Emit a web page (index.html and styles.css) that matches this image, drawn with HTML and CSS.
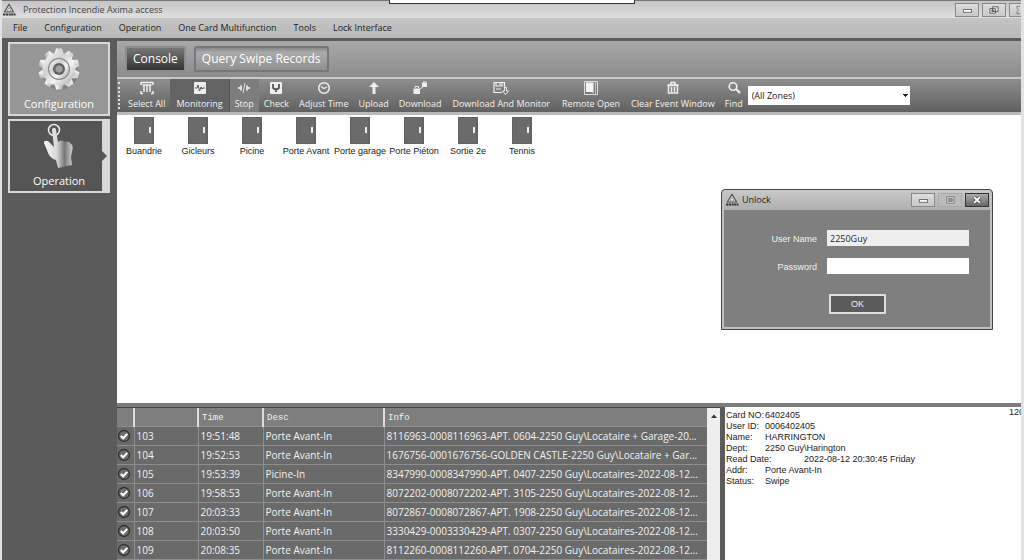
FILE: index.html
```html
<!DOCTYPE html>
<html lang="en">
<head>
<meta charset="utf-8">
<title>Protection Incendie Axima access</title>
<link rel="stylesheet" href="styles.css">
</head>
<body>
<svg class="defs" aria-hidden="true">
  <defs>
    <linearGradient id="metal" x1="0" y1="0" x2="1" y2="1">
      <stop offset="0" stop-color="#fff"/><stop offset=".35" stop-color="#cfcfcf"/><stop offset=".6" stop-color="#f4f4f4"/><stop offset="1" stop-color="#a0a0a0"/>
    </linearGradient>
    <linearGradient id="skin" x1="0" y1="0" x2="1" y2="0">
      <stop offset="0" stop-color="#fafafa"/><stop offset=".45" stop-color="#d8d8d8"/><stop offset=".72" stop-color="#777"/><stop offset="1" stop-color="#d0d0d0"/>
    </linearGradient>
    <symbol id="logo" viewBox="0 0 14 14">
      <path d="M7 1.200 11.600 9H2.400Z" fill="#ddd" stroke="#555" stroke-width="1.200" stroke-linejoin="round"/>
      <path d="M7 4.600 9 8H5Z" fill="#fff" stroke="#666" stroke-width=".6"/>
      <path d="M1 11.500h2.400M4 11.500h2.200M6.800 11.500h1.900M9.200 11.500h1.800M11.500 11.500H13.500" stroke="#333" stroke-width="2"/>
    </symbol>
    <symbol id="door" viewBox="0 0 20 27">
      <path d="M0 0h20v27H0z" fill="#626262"/><path d="M1 1h17v25H1z" fill="#6b6b6b"/>
      <path d="M15 10h2v6h-2z" fill="#eee"/>
    </symbol>
    <symbol id="tick" viewBox="0 0 14 14">
      <circle cx="7" cy="7" r="5.500" fill="#6c6c6c" stroke="#303030" stroke-width="1.300"/>
      <path d="M3.800 7 6.200 9.300 10.300 4.900" fill="none" stroke="#fff" stroke-width="2"/>
    </symbol>
  </defs>
</svg>
<div class="window">
  <header class="titlebar">
    <svg class="logo"><use href="#logo"/></svg>
    <h1 class="title">Protection Incendie Axima access</h1>
    <div class="winbuttons">
      <button class="winbtn" aria-label="Minimize"><svg viewBox="0 0 24 12"><rect x="8" y="5.500" width="9" height="3" fill="#fff" stroke="#666"/></svg></button>
      <button class="winbtn" aria-label="Restore"><svg viewBox="0 0 24 12"><path d="M10.500 2.500h6v5h-6zM7.500 4.500h6v5h-6z" fill="#eee" stroke="#555"/><path d="M9.500 6.500h2v1h-2z" stroke="#555" fill="none"/></svg></button>
      <button class="winbtn winbtn-cut" aria-label="Close"><svg viewBox="0 0 12 12"><path d="M11 2H7.500v2L9.500 6 7.500 8v2H11" fill="none" stroke="#777"/></svg></button>
    </div>
    <div class="topnotch"></div>
  </header>
  <nav class="menubar">
    <a href="#">File</a><a href="#">Configuration</a><a href="#">Operation</a><a href="#">One Card Multifunction</a><a href="#">Tools</a><a href="#">Lock Interface</a>
  </nav>
  <div class="body">
    <aside class="sidebar">
      <button class="side">
        <svg class="sideicon" viewBox="0 0 46 46">
          <circle cx="24" cy="26" r="18" fill="#6f6f6f" opacity=".5"/>
          <g fill="url(#metal)">
            <path id="teeth" d="M20 2.500h6l2 7H18zM20 43.500h6l2-7H18z"/>
            <use href="#teeth" transform="rotate(36 23 23)"/>
            <use href="#teeth" transform="rotate(72 23 23)"/>
            <use href="#teeth" transform="rotate(108 23 23)"/>
            <use href="#teeth" transform="rotate(144 23 23)"/>
            <circle cx="23" cy="23" r="16.500"/>
          </g>
          <circle cx="23" cy="23" r="11" fill="#858585"/>
          <circle cx="23" cy="23" r="10" fill="url(#metal)"/>
          <circle cx="23" cy="23" r="6" fill="#606060"/>
          <path d="m23 19 3.500 2v4L23 27l-3.500-2v-4z" fill="#a0a0a0"/>
        </svg>
        <span>Configuration</span>
      </button>
      <button class="side side-active">
        <svg class="sideicon" viewBox="0 0 46 46">
          <circle cx="18" cy="7" r="5.500" fill="none" stroke="#eee" stroke-width="1.500"/>
          <path d="M16 7c0-3 4-3 4 0l2 12c3-3 6-1 7 0 3-1 5 0 6 2 2 1 2 4 1 8l-1 5 1 8-14 3-2-8c-5-1-8-6-9-10l-3-7c0-3 4-3 6 0l4 4z" fill="url(#skin)"/>
        </svg>
        <span>Operation</span>
      </button>
    </aside>
    <main class="main">
      <div class="tabs">
        <button class="tab tab-active">Console</button>
        <button class="tab">Query Swipe Records</button>
      </div>
      <div class="toolbar">
        <div class="grip"></div>
        <button class="tool"><svg viewBox="0 0 16 14"><path d="M2 1v3M2 10v3M14 1v3M14 10v3M2 1.500h12M2 12.500h2M12 12.500h2M5 4v7M8 4v7M11 4v7M3.500 4h9" stroke="#eee" stroke-width="1.500" fill="none"/></svg><span>Select All</span></button>
        <button class="tool tool-wide tool-dark"><svg viewBox="0 0 16 14"><rect x="2" y="1" width="12" height="12" rx="1" fill="#eee"/><path d="M3 7h2l1-3 1.500 6L9 6l1 2 1-1h2" stroke="#555" fill="none"/></svg><span>Monitoring</span></button>
        <button class="tool tool-light"><svg viewBox="0 0 16 14"><path d="M2 7h3M11 7h3M5 4.500v5M11 4.500v5" stroke="#ddd" stroke-width="2"/><path d="M9 2 7 12" stroke="#ddd"/></svg><span>Stop</span></button>
        <button class="tool"><svg viewBox="0 0 16 14"><rect x="2" y="1" width="12" height="12" rx="1" fill="#eee"/><path d="M5 3v3c0 3 6 3 6 0V3M8 8v3" stroke="#555" stroke-width="1.800" fill="none"/></svg><span>Check</span></button>
        <button class="tool"><svg viewBox="0 0 16 14"><circle cx="8" cy="7" r="5.300" fill="none" stroke="#eee" stroke-width="1.500"/><path d="m5 5.500 3 2 3-1.500" fill="none" stroke="#eee" stroke-width="1.300"/></svg><span>Adjust Time</span></button>
        <button class="tool"><svg viewBox="0 0 16 14"><path d="m8 1 5 5H9.500v7h-3V6H3z" fill="#eee"/></svg><span>Upload</span></button>
        <button class="tool"><svg viewBox="0 0 16 14"><path d="M1.500 7.500H8V13H1.500zM10 2h5v4h-5z" fill="#eee"/><path d="M3 7V5.500h3.500V7M11 2V1h3v1M8 8l3-2.500" stroke="#eee" fill="none"/></svg><span>Download</span></button>
        <button class="tool tool-wide"><svg viewBox="0 0 16 14"><path d="M1 1.500h10.500V7M1 1v10.500h8M3 1.500V5h6V1.500M7 2v2M3 8h5" fill="none" stroke="#eee" stroke-width="1.200"/><path d="M11.500 6.500h2V10h2l-3 3.500-3-3.500h2z" fill="#777" stroke="#eee"/></svg><span>Download And Monitor</span></button>
        <button class="tool tool-wide"><svg viewBox="0 0 16 14"><path d="M1.500.5h13v13h-13z" fill="none" stroke="#ddd"/><path d="M3 1.500h7.500v11L9 11H3z" fill="#f4f4f4"/><path d="M12.500 1v12" stroke="#bbb"/></svg><span>Remote Open</span></button>
        <button class="tool"><svg viewBox="0 0 16 14"><path d="M2.500 4h11M6 3.500v-2h4v2" fill="none" stroke="#eee" stroke-width="1.500"/><path d="M3.500 4.500h9V12h-9zM6.500 6v5M9.500 6v5" fill="none" stroke="#eee" stroke-width="1.500"/></svg><span>Clear Event Window</span></button>
        <button class="tool"><svg viewBox="0 0 16 14"><circle cx="7" cy="5.500" r="3.800" fill="none" stroke="#eee" stroke-width="1.600"/><path d="m10 8 4 4" stroke="#eee" stroke-width="2.400"/></svg><span>Find</span></button>
        <select class="zones" aria-label="Zones"><option>(All Zones)</option></select>
      </div>
      <ul class="doors">
        <li><svg><use href="#door"/></svg>Buandrie</li>
        <li><svg><use href="#door"/></svg>Gicleurs</li>
        <li><svg><use href="#door"/></svg>Picine</li>
        <li><svg><use href="#door"/></svg>Porte Avant</li>
        <li><svg><use href="#door"/></svg>Porte garage</li>
        <li><svg><use href="#door"/></svg>Porte Piéton</li>
        <li><svg><use href="#door"/></svg>Sortie 2e</li>
        <li><svg><use href="#door"/></svg>Tennis</li>
      </ul>
      <div class="bottom">
        <div class="events">
          <table class="log">
            <colgroup><col class="c-tick"><col class="c-num"><col class="c-time"><col class="c-desc"><col></colgroup>
            <thead><tr><th></th><th></th><th>Time</th><th>Desc</th><th>Info</th></tr></thead>
            <tbody>
              <tr><td><svg><use href="#tick"/></svg></td><td>103</td><td>19:51:48</td><td>Porte Avant-In</td><td>8116963-0008116963-APT. 0604-2250 Guy\Locataire + Garage-20...</td></tr>
              <tr><td><svg><use href="#tick"/></svg></td><td>104</td><td>19:52:53</td><td>Porte Avant-In</td><td>1676756-0001676756-GOLDEN CASTLE-2250 Guy\Locataire + Gar...</td></tr>
              <tr><td><svg><use href="#tick"/></svg></td><td>105</td><td>19:53:39</td><td>Picine-In</td><td>8347990-0008347990-APT. 0407-2250 Guy\Locataires-2022-08-12...</td></tr>
              <tr><td><svg><use href="#tick"/></svg></td><td>106</td><td>19:58:53</td><td>Porte Avant-In</td><td>8072202-0008072202-APT. 3105-2250 Guy\Locataires-2022-08-12...</td></tr>
              <tr><td><svg><use href="#tick"/></svg></td><td>107</td><td>20:03:33</td><td>Porte Avant-In</td><td>8072867-0008072867-APT. 1908-2250 Guy\Locataires-2022-08-12...</td></tr>
              <tr><td><svg><use href="#tick"/></svg></td><td>108</td><td>20:03:50</td><td>Porte Avant-In</td><td>3330429-0003330429-APT. 0307-2250 Guy\Locataires-2022-08-12...</td></tr>
              <tr><td><svg><use href="#tick"/></svg></td><td>109</td><td>20:08:35</td><td>Porte Avant-In</td><td>8112260-0008112260-APT. 0704-2250 Guy\Locataires-2022-08-12...</td></tr>
            </tbody>
          </table>
          <div class="scroll"><svg viewBox="0 0 6 4"><path d="m0 4 3-3.500L6 4z" fill="#333"/></svg></div>
        </div>
        <section class="detail">
          <dl>
            <div><dt>Card NO:</dt><dd>6402405</dd></div>
            <div><dt>User ID:</dt><dd>0006402405</dd></div>
            <div><dt>Name:</dt><dd>HARRINGTON</dd></div>
            <div><dt>Dept:</dt><dd>2250 Guy\Harington</dd></div>
            <div><dt class="wide">Read Date:</dt><dd>2022-08-12 20:30:45 Friday</dd></div>
            <div><dt>Addr:</dt><dd>Porte Avant-In</dd></div>
            <div><dt>Status:</dt><dd>Swipe</dd></div>
          </dl>
          <span class="count">120</span>
        </section>
      </div>
    </main>
  </div>
  <form class="dialog" role="dialog" aria-label="Unlock">
    <div class="dialog-head">
      <svg class="logo"><use href="#logo"/></svg>
      <h2 class="dialog-title">Unlock</h2>
      <button type="button" class="winbtn" aria-label="Minimize"><svg viewBox="0 0 24 12"><rect x="8" y="5.500" width="9" height="3" fill="#fff" stroke="#666"/></svg></button>
      <button type="button" class="winbtn winbtn-off" aria-label="Maximize"><svg viewBox="0 0 24 12"><path d="M8.500 2.500h8v7h-8z" fill="#ddd" stroke="#777"/><path d="M10.500 4.500h4v3h-4z" fill="#999" stroke="#777"/></svg></button>
      <button type="button" class="winbtn winbtn-close" aria-label="Close"><svg viewBox="0 0 24 12"><path d="m9 3 6 6m0-6-6 6" stroke="#444" stroke-width="3.500"/><path d="m9 3 6 6m0-6-6 6" stroke="#fff" stroke-width="2"/></svg></button>
    </div>
    <div class="dialog-body">
      <label for="user">User Name</label><input id="user" class="readonly" type="text" value="2250Guy" readonly>
      <label for="pass">Password</label><input id="pass" type="password">
      <button type="submit" class="ok">OK</button>
    </div>
  </form>
</div>
</body>
</html>
```
FILE: styles.css
```css
* { box-sizing: border-box; }
html, body { height: 100%; }
body { margin: 0; overflow: hidden; background: #e2e2e2; font: 9px/12px "Open Sans", "Noto Sans", sans-serif; color: #222; }
button, select, input { font: inherit; color: inherit; margin: 0; padding: 0; border: 0; border-radius: 0; }
h1, h2, ul, dl, dd { margin: 0; padding: 0; font-weight: 400; }
svg { display: block; }
.defs { position: absolute; width: 0; height: 0; }

.window { position: relative; display: flex; flex-direction: column; height: 100vh; margin: 0 3px 0 2px; overflow: hidden; }
.logo { width: 14px; height: 14px; flex: none; }

.titlebar { position: relative; display: flex; align-items: center; gap: 7px; height: 18px; flex: none; border-top: 1px solid #777; background: linear-gradient(#c4c4c4, #e0e0e0); }
.title { flex: 1; font-size: 9px; color: #444; }
.winbuttons { display: flex; gap: 3px; }
.winbtn { width: 24px; height: 14px; flex: none; display: flex; align-items: center; justify-content: center; border: 1px solid #888; background: linear-gradient(#ddd, #c8c8c8); }
.winbtn svg { width: 22px; height: 12px; }
.winbtn-cut { width: 12px; border-right: 0; }
.winbtn-cut svg { width: 11px; }
.topnotch { position: absolute; top: -1px; left: 38%; width: 246px; height: 4px; border: 1px solid #333; border-top: 0; background: #fff; }

.menubar { display: flex; align-items: center; gap: 17px; height: 20px; flex: none; padding-left: 11px; background: linear-gradient(#c4c4c4, #b8b8b8); }
.menubar a { color: #222; text-decoration: none; white-space: nowrap; }

.body { flex: 1; display: flex; min-height: 0; border-top: 3px solid #5b5b5b; background: #5b5b5b; }
.sidebar { width: 115px; flex: none; display: flex; flex-direction: column; gap: 3px; padding: 1px 7px 0 6px; }
.side { display: flex; flex-direction: column; align-items: center; justify-content: space-between; height: 74px; padding: 2px 0 2px; border: 2px solid #d8d8d8; background: #969696; color: #fff; font-size: 11px; line-height: 16px; }
.sideicon { width: 46px; height: 46px; }
.side-active { position: relative; background: #555; }
.side-active::before { content: ""; position: absolute; top: 0; right: 0; bottom: 0; width: 6px; background: #d8d8d8; }
.side-active::after { content: ""; position: absolute; top: 30px; right: 1px; border: 5px solid transparent; border-right: 0; border-left-color: #555; }

.main { flex: 1; min-width: 0; display: flex; flex-direction: column; }
.tabs { display: flex; align-items: center; gap: 8px; height: 38px; flex: none; padding-left: 8px; background: linear-gradient(#a8a8a8, #8c8c8c); border-bottom: 2px solid #c8c8c8; }
.tab { height: 26px; padding: 0 6px; border: 2px solid #777; background: linear-gradient(#888, #aaa 20%, #909090); color: #fff; font-size: 12px; border-radius: 2px; }
.tab-active { border-color: #8c8c8c; background: linear-gradient(#777, #333); }

.toolbar { display: flex; align-items: center; height: 36px; flex: none; border-bottom: 3px solid #bababa; background: linear-gradient(#8e8e8e, #606060); color: #f2f2f2; }
.grip { align-self: stretch; width: 3px; margin: 3px 2px 3px 1px; border-left: 2px dotted #ddd; }
.tool { align-self: stretch; display: flex; flex-direction: column; align-items: center; justify-content: space-between; padding: 2px 5px; background: none; white-space: nowrap; }
.tool svg { width: 16px; height: 14px; }
.tool-wide { padding: 2px 6px; }
.tool-dark { background: #636363; }
.tool-light { background: #7d7d7d; border-left: 1px solid #555; }
.zones { width: 162px; height: 19px; padding: 0 4px; appearance: none; background: #fff conic-gradient(from -45deg at 50% 100%, #222 90deg, transparent 0) no-repeat right 2px center / 6px 3px; color: #222; }

.doors { flex: 1; min-height: 0; display: flex; align-items: flex-start; padding: 2px 0; background: #fff; list-style: none; }
.doors li { width: 54px; display: flex; flex-direction: column; align-items: center; gap: 1px; font-family: "Liberation Sans", Arial, sans-serif; white-space: nowrap; }
.doors svg { width: 20px; height: 27px; }

.bottom { display: flex; height: 157px; flex: none; border-top: 4px solid #7c7c7c; }
.events { flex: 2; min-width: 0; display: flex; align-items: stretch; border-top: 1px solid #444; overflow: hidden; background: #6a6a6a; }
.log { flex: 1; min-width: 0; align-self: flex-start; table-layout: fixed; border-collapse: collapse; color: #f2f2f2; }
.c-tick { width: 17px; }
.c-num { width: 64px; }
.c-time { width: 65px; }
.c-desc { width: 121px; }
.log th { height: 18px; padding: 2px 3px 0; border-left: 2px solid #ddd; background: #7e7e7e; text-align: left; font: 9px/12px "Liberation Mono", "Courier New", monospace; }
.log th:first-child { border-left: 0; }
.log td { height: 19px; padding: 0 2px; border: 1px solid #8e8e8e; border-right: 0; white-space: nowrap; overflow: hidden; font-size: 10px; line-height: 14px; }
.log td:first-child { padding: 0; border-left: 0; }
.log td svg { width: 14px; height: 14px; }
.scroll { width: 13px; flex: none; padding: 6px 4px; background: #eee; }
.scroll svg { width: 6px; height: 4px; }
.detail { flex: none; width: 33.3%; display: flex; justify-content: space-between; align-items: flex-start; border-left: 5px solid #5b5b5b; background: #fff; overflow: hidden; padding-left: 1px; font: 9px/11px "Liberation Sans", Arial, sans-serif; white-space: nowrap; }
.detail dl { padding-top: 3px; }
.detail dl div { display: flex; }
.detail dt { width: 39px; }
.detail .wide { width: 78px; }
.count { width: 12px; overflow: hidden; }

.dialog { position: absolute; top: 189px; right: 28px; width: 272px; border: 1px solid #444; border-radius: 4px 4px 0 0; background: #c0c0c0; padding: 0 2px 2px; }
.dialog-head { display: flex; align-items: center; gap: 3px; height: 20px; padding: 0 1px; background: linear-gradient(#c8c8c8, #b0b0b0); }
.dialog-title { flex: 1; font-size: 9px; }
.winbtn-off { border-color: #aaa; background: #bbb; }
.winbtn-close { border-color: #333; background: linear-gradient(#aaa, #666); }
.dialog-body { display: grid; grid-template-columns: 93px 142px; column-gap: 10px; row-gap: 12px; align-content: start; align-items: center; height: 117px; padding: 20px 0 11px; background: #7f7f7f; color: #f2f2f2; font-family: "Liberation Sans", Arial, sans-serif; }
.dialog-body label { padding-top: 2px; text-align: right; }
.dialog-body input { width: 100%; height: 16px; padding: 0 3px; background: #fff; color: #222; font: 9px/12px "Open Sans", sans-serif; }
.dialog-body .readonly { background: #eee; }
.ok { grid-column: 2; justify-self: start; width: 57px; height: 20px; margin: 8px 0 0 2px; border: 2px solid #ddd; background: #5b5b5b; }
```
